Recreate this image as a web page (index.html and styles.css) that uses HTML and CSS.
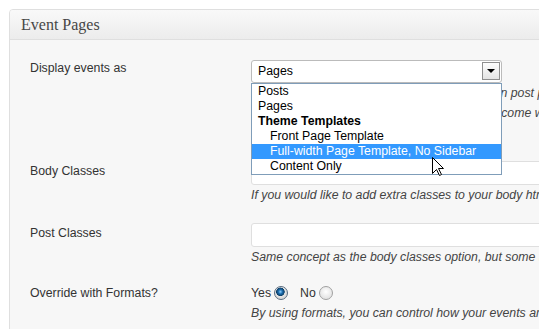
FILE: index.html
```
<!DOCTYPE html>
<html lang="en">

<head>
    <meta charset="UTF-8">
    <meta name="viewport" content="width=device-width, initial-scale=1.0">
    <title>Event Pages</title>
    <link rel="stylesheet" href="styles.css">
</head>

<body>
    <div class="postbox">
        <h3 class="hndle">Event Pages</h3>

        <div class="inside">
            <div class="form-row">
                <div class="label">Display events as</div>
                <div class="field">
                    <div class="select">
                        <span class="select-value">Pages</span>
                        <span class="select-btn"><span class="arrow"></span></span>
                        <ul class="select-list">
                            <li>Posts</li>
                            <li>Pages</li>
                            <li class="group">Theme Templates</li>
                            <li class="sub">Front Page Template</li>
                            <li class="sub active">
                                Full-width Page Template, No Sidebar
                                <svg class="cursor" width="13" height="20" viewBox="0 0 13 20">
                                    <path d="M0.5 0.5 L0.5 16.5 L4.5 12.5 L7.5 18.5 L9.5 17.5 L6.5 11.5 L11.5 11.5 Z" fill="#fff" stroke="#000" stroke-width="1" />
                                </svg>
                            </li>
                            <li class="sub">Content Only</li>
                        </ul>
                    </div>
                    <p class="desc">
                        If you choose Posts, events will be displayed in post pages<br>
                        using the post template of your theme, and become what your theme shows<br>
                        for a single post.
                    </p>
                </div>
            </div>

            <div class="form-row">
                <div class="label">Body Classes</div>
                <div class="field">
                    <input type="text" class="text-input">
                    <p class="desc">If you would like to add extra classes to your body html tag on event pages, enter them here.</p>
                </div>
            </div>

            <div class="form-row">
                <div class="label">Post Classes</div>
                <div class="field">
                    <input type="text" class="text-input">
                    <p class="desc">Same concept as the body classes option, but some themes use the post_class() function.</p>
                </div>
            </div>

            <div class="form-row last">
                <div class="label">Override with Formats?</div>
                <div class="field">
                    <div class="radios">
                        Yes <span class="radio checked"></span>
                        <span class="no">No</span> <span class="radio"></span>
                    </div>
                    <p class="desc">By using formats, you can control how your events are displayed on this page.</p>
                </div>
            </div>
        </div>
    </div>
</body>

</html>
```

FILE: styles.css
```
body {
    margin: 0;
    overflow: hidden;
    background: #fff;
    font-family: "Liberation Sans", Arial, sans-serif;
    font-size: 12.3px;
    color: #333;
}

.postbox {
    margin: 9px -40px 0 9px;
    border: 1px solid #dfdfdf;
    border-radius: 4px 0 0 0;
    background: #f7f7f7;
    height: 400px;
}

.hndle {
    margin: 0;
    height: 29px;
    line-height: 29px;
    padding-left: 11px;
    border-bottom: 1px solid #dfdfdf;
    border-radius: 3px 0 0 0;
    background: linear-gradient(#f9f9f9, #ececec);
    font-family: "Liberation Serif", Georgia, serif;
    font-size: 16px;
    font-weight: normal;
    color: #464646;
}

.inside {
    padding-left: 20px;
}

.form-row {
    display: grid;
    grid-template-columns: 221px 1fr;
    padding-top: 18px;
}

.form-row.last {
    padding-top: 16px;
}

.label {
    line-height: 20px;
}

.desc {
    margin: 0;
    line-height: 20px;
    font-style: italic;
    color: #444;
    white-space: nowrap;
}

/* the open select */
.select {
    position: relative;
    margin-top: 2px;
    width: 251px;
    height: 23px;
    box-sizing: border-box;
    border: 1px solid #bbb;
    border-radius: 3px;
    background: #fff;
}

.select-value {
    display: block;
    padding-left: 6px;
    line-height: 21px;
    color: #000;
}

.select-btn {
    position: absolute;
    top: 1px;
    right: 1px;
    width: 18px;
    height: 18px;
    box-sizing: border-box;
    border: 1px solid #8f8f8f;
    background: linear-gradient(#fdfdfd, #e4e4e4);
}

.arrow {
    position: absolute;
    left: 4px;
    top: 6px;
    border-left: 4px solid transparent;
    border-right: 4px solid transparent;
    border-top: 4px solid #000;
}

.select-list {
    position: absolute;
    top: 22px;
    left: -1px;
    width: 251px;
    box-sizing: border-box;
    margin: 0;
    padding: 0;
    list-style: none;
    border: 1px solid #7f9db9;
    background: #fff;
    z-index: 2;
}

.select-list li {
    position: relative;
    height: 15px;
    line-height: 15px;
    padding-left: 6px;
    color: #000;
    white-space: nowrap;
}

.select-list .group {
    font-weight: bold;
}

.select-list .sub {
    padding-left: 18px;
}

.select-list .active {
    background: #3399ff;
    color: #fff;
}

.cursor {
    position: absolute;
    left: 180px;
    top: 13px;
}

.text-input {
    display: block;
    margin: 0;
    width: 400px;
    height: 24px;
    box-sizing: border-box;
    border: 1px solid #dfdfdf;
    border-radius: 3px;
    background: #fff;
}

.radios {
    display: flex;
    align-items: center;
    height: 20px;
    line-height: 20px;
}

.radio {
    display: inline-block;
    width: 14px;
    height: 14px;
    box-sizing: border-box;
    margin-left: 3px;
    border: 1px solid #a0a0a0;
    border-radius: 50%;
    background: radial-gradient(circle at 50% 40%, #fff 0, #e6e6e6 6px);
}

.radio.checked {
    border-color: #5a6d80;
    background: radial-gradient(circle at 45% 40%, #8fd0ff 0, #1e6fb0 2px, #0b3d66 4px, #e8e8e8 4.5px, #dcdcdc 6px);
}

.no {
    margin-left: 12px;
}
```
